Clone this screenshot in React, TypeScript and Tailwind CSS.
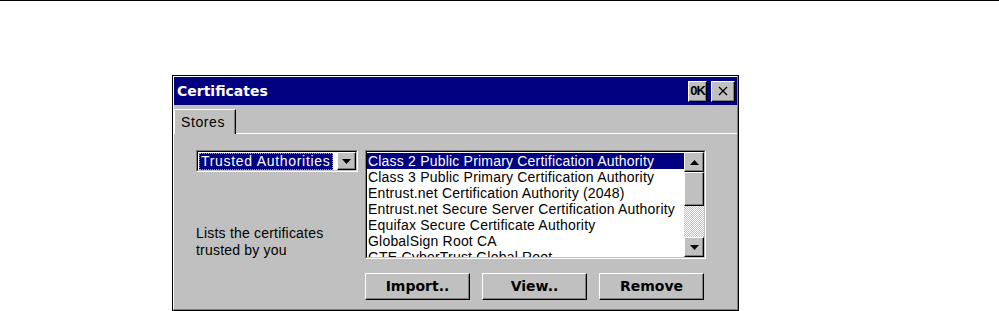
import React from 'react'

const items = [
  'Class 2 Public Primary Certification Authority',
  'Class 3 Public Primary Certification Authority',
  'Entrust.net Certification Authority (2048)',
  'Entrust.net Secure Server Certification Authority',
  'Equifax Secure Certificate Authority',
  'GlobalSign Root CA',
  'GTE CyberTrust Global Root',
]

function Arrow({ up }: { up?: boolean }) {
  return (
    <svg width="9" height="5" viewBox="0 0 9 5">
      {up ? <path d="M4.5 0 L9 5 L0 5 Z" fill="#000" /> : <path d="M0 0 L9 0 L4.5 5 Z" fill="#000" />}
    </svg>
  )
}

function SmallButton({ children, className = '' }: { children: React.ReactNode; className?: string }) {
  return (
    <div className={`flex items-center justify-center border border-t-white border-l-white border-r-black border-b-black bg-[#c0c0c0] ${className}`}>
      {children}
    </div>
  )
}

function PushButton({ label }: { label: string }) {
  return (
    <div className="flex h-[27px] w-[105px] items-center justify-center border border-t-white border-l-white border-r-black border-b-black bg-[#c0c0c0] font-['DejaVu_Sans',sans-serif] text-[14px] font-bold shadow-[inset_-1px_-1px_0_#808080]">
      {label}
    </div>
  )
}

export default function App() {
  return (
    <div className="h-[311px] w-[999px] overflow-hidden border-t border-black bg-white font-['Liberation_Sans',sans-serif] text-black">
      {/* Window */}
      <div className="ml-[172px] mt-[74px] flex h-[236px] w-[567px] flex-col border border-black bg-[#c0c0c0]">
        <div className="flex flex-1 flex-col border border-t-white border-l-white border-r-[#808080] border-b-[#808080]">
          {/* Title bar */}
          <div className="flex h-[28px] items-center bg-[#000080] pl-[3px] pr-[2px]">
            <span className="flex-1 font-['DejaVu_Sans',sans-serif] text-[14px] font-bold text-white">Certificates</span>
            <SmallButton className="h-[21px] w-[19px] text-[13px] font-bold tracking-[-1px] shadow-[inset_-1px_-1px_0_#808080]">
              0K
            </SmallButton>
            <SmallButton className="ml-[4px] h-[21px] w-[24px] shadow-[inset_-1px_-1px_0_#808080]">
              <svg width="10" height="10" viewBox="0 0 10 10">
                <path d="M1 1 L9 9 M9 1 L1 9" stroke="#000" strokeWidth="1.3" />
              </svg>
            </SmallButton>
          </div>

          {/* Tabs */}
          <div className="mt-[4px] flex h-[25px] items-end">
            <div className="flex h-[25px] w-[62px] items-center border-l border-t border-r border-t-white border-l-white border-r-black pl-[6px] text-[14px] tracking-[0.6px] shadow-[inset_-1px_0_0_#808080]">
              Stores
            </div>
            <div className="flex-1 border-b border-white shadow-[0_-1px_0_#808080_inset]" />
          </div>

          {/* Body */}
          <div className="flex flex-1 pl-[22px] pt-[16px]">
            <div className="flex w-[169px] flex-col">
              {/* Combo */}
              <div className="flex h-[22px] w-[162px] items-center border border-t-[#808080] border-l-[#808080] border-r-white border-b-white bg-white">
                <div className="flex h-full flex-1 items-center border border-t-black border-l-black border-r-[#c0c0c0] border-b-[#c0c0c0] bg-white pl-[1px]">
                  <span className="flex h-[17px] items-center border border-dotted border-[#c0c000] bg-[#000080] px-[1px] text-[14px] tracking-[0.7px] text-white">
                    Trusted Authorities
                  </span>
                  <div className="flex-1" />
                  <SmallButton className="h-[18px] w-[19px] shadow-[inset_-1px_-1px_0_#808080]">
                    <Arrow />
                  </SmallButton>
                </div>
              </div>
              <div className="mt-[53px] text-[14px] leading-[17px] tracking-[0.2px]">
                <div>Lists the certificates</div>
                <div>trusted by you</div>
              </div>
            </div>

            <div className="flex flex-col">
              {/* List */}
              <div className="flex h-[109px] w-[341px] border border-t-[#808080] border-l-[#808080] border-r-white border-b-white">
                <div className="flex flex-1 border border-t-black border-l-black border-r-[#c0c0c0] border-b-[#c0c0c0] bg-white">
                  <div className="flex-1 overflow-hidden pt-[1px] text-[14px] leading-[16px] tracking-[0.2px]">
                    {items.map((t, i) => (
                      <div
                        key={t}
                        className={`whitespace-nowrap pl-[1px] ${i === 0 ? 'bg-[#000080] text-white' : ''}`}
                      >
                        {t}
                      </div>
                    ))}
                  </div>
                  {/* Scrollbar */}
                  <div className="flex w-[20px] flex-col bg-[repeating-conic-gradient(#c0c0c0_0_25%,#ffffff_0_50%)] bg-[length:2px_2px]">
                    <SmallButton className="h-[20px] shadow-[inset_-1px_-1px_0_#808080]">
                      <Arrow up />
                    </SmallButton>
                    <SmallButton className="h-[34px] shadow-[inset_-1px_-1px_0_#808080]">{null}</SmallButton>
                    <div className="flex-1" />
                    <SmallButton className="h-[20px] shadow-[inset_-1px_-1px_0_#808080]">
                      <Arrow />
                    </SmallButton>
                  </div>
                </div>
              </div>
              {/* Buttons */}
              <div className="mt-[14px] flex gap-[12px]">
                <PushButton label="Import.." />
                <PushButton label="View.." />
                <PushButton label="Remove" />
              </div>
            </div>
          </div>
        </div>
      </div>
    </div>
  )
}
